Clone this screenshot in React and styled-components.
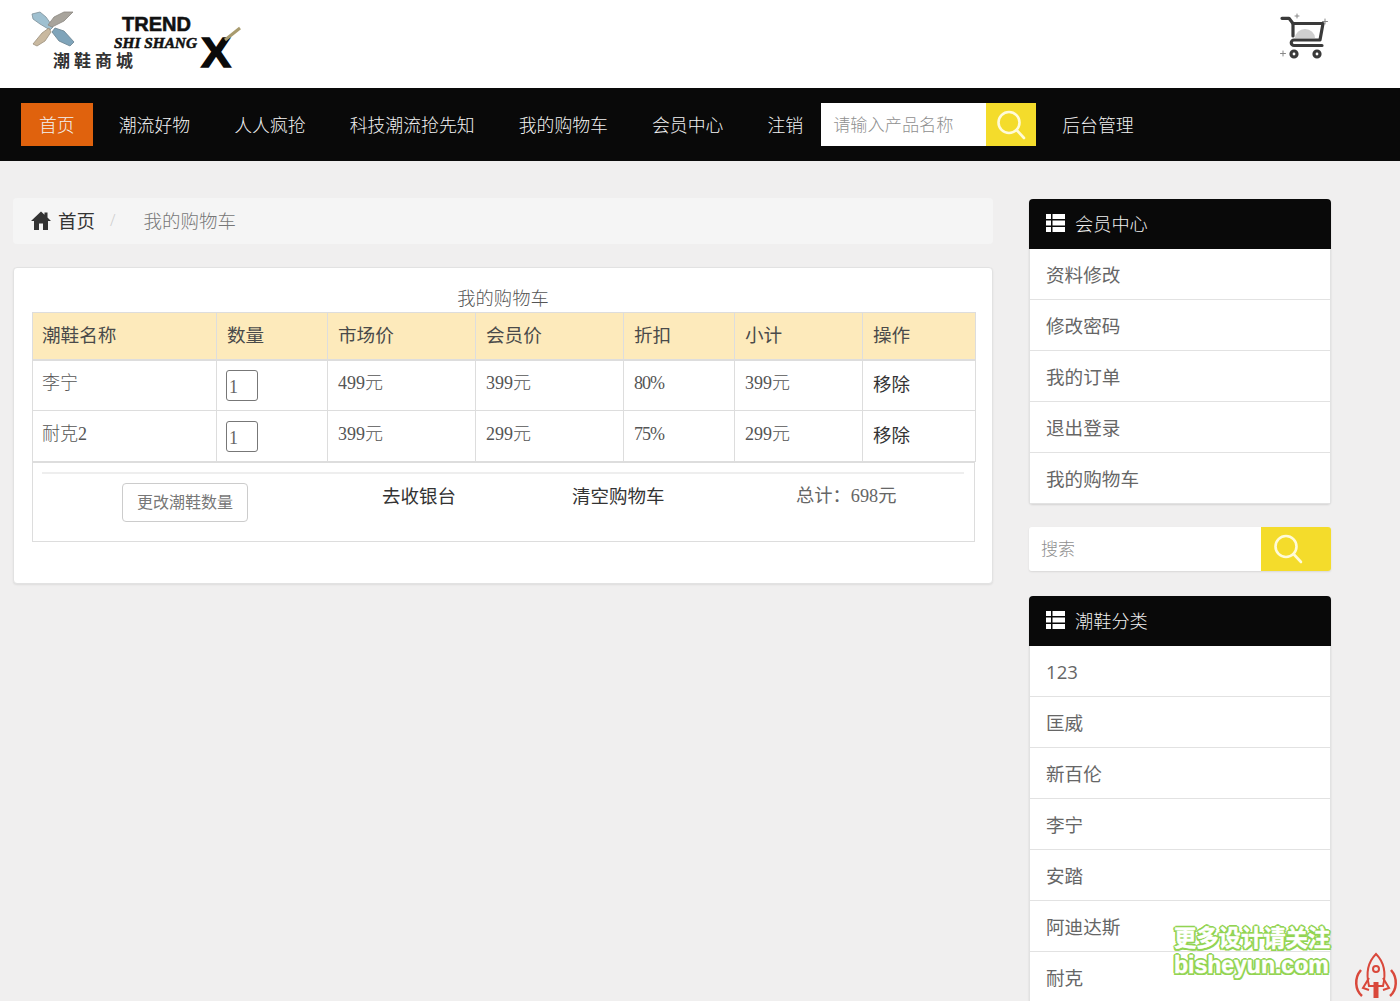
import React from "react";
import styled, { createGlobalStyle } from "styled-components";

const SANS = `"Open Sans", "Noto Sans CJK SC", sans-serif`;
const SERIF = `"Liberation Serif", "Noto Sans CJK SC", serif`;

const GlobalStyle = createGlobalStyle`
  html, body {
    margin: 0;
    height: 100%;
    overflow: hidden;
    background: #f0efef;
    font-family: ${SANS};
  }
  * {
    box-sizing: border-box;
  }
`;

const Page = styled.div`
  position: relative;
  height: 1001px;
  overflow: hidden;
`;

const TopBar = styled.header`
  height: 88px;
  background: #fff;
  display: flex;
  justify-content: space-between;
  padding: 8px 72px 0 26px;
`;

const Nav = styled.nav`
  height: 73px;
  background: #090909;
  display: flex;
  align-items: center;
  padding-left: 21px;
`;

const NavLink = styled.a`
  height: 43px;
  line-height: 45px;
  padding: 0 18px;
  font-size: 17.87px;
  color: #f2f2f2;
  font-weight: 300;
  background: ${(p) => (p.$active ? "#e0620d" : "transparent")};
  white-space: nowrap;
  & + & {
    margin-left: 8px;
  }
`;

const NavSearch = styled.form`
  display: flex;
  width: 215px;
  height: 43px;
  margin: 0 8px 0 0;
`;

const SearchInput = styled.div`
  flex: 1;
  background: #fff;
  color: #8f8f8f;
  font-size: ${(p) => p.$size || 17.2}px;
  line-height: ${(p) => p.$height || 43}px;
  padding-left: 12px;
  font-weight: 300;
`;

const SearchButton = styled.div`
  width: ${(p) => p.$width || 50}px;
  padding-right: ${(p) => p.$inset || 0}px;
  background: #f4dc2b;
  display: flex;
  align-items: center;
  justify-content: center;
`;

const Main = styled.main`
  display: flex;
  gap: 36px;
  padding: 37px 0 0 13px;
  align-items: flex-start;
`;

const Content = styled.section`
  width: 980px;
`;

const Breadcrumb = styled.div`
  height: 46px;
  background: #f5f5f5;
  border-radius: 4px;
  display: flex;
  align-items: center;
  padding: 0 0 2px 18px;
  font-size: 18.5px;
  color: #333;
  margin-bottom: 23px;
`;

const CrumbHome = styled.span`
  display: flex;
  align-items: center;
  gap: 7px;
  font-weight: 400;
`;

const CrumbDivider = styled.span`
  color: #ccc;
  margin: 0 28px 0 15px;
  font-size: 16px;
  font-weight: 300;
`;

const CrumbCurrent = styled.span`
  color: #777;
  font-weight: 300;
`;

const Card = styled.div`
  height: 317px;
  background: #fff;
  border: 1px solid #e2e2e2;
  border-radius: 4px;
  box-shadow: 0 1px 2px rgba(0, 0, 0, 0.08);
  padding: 19px 18px 0;
`;

const Table = styled.table`
  width: 943px;
  border-collapse: collapse;
  table-layout: fixed;
  font-family: ${SERIF};
  color: #555;
  font-weight: 300;
`;

const Caption = styled.caption`
  padding-right: 2px;
  font-size: 18.3px;
  line-height: 25px;
  color: #555;
  font-weight: 300;
`;

const Th = styled.th`
  height: 47px;
  padding: 0 10px 4px 10px;
  background: #fdeabb;
  border: 1px solid #dddddd;
  border-bottom-width: 2px;
  text-align: left;
  font-size: 18.6px;
  font-weight: 400;
  color: #4a4a4a;
  &:first-child {
    padding-left: 9px;
  }
`;

const Td = styled.td`
  height: 51px;
  padding: 0 10px 4px;
  border: 1px solid #dddddd;
  font-size: 18px;
  line-height: 24px;
  vertical-align: middle;
  letter-spacing: ${(p) => (p.$tight ? "-1px" : "normal")};
  &:first-child {
    padding-left: 9px;
  }
`;

const QtyBox = styled.div`
  width: 32px;
  height: 31px;
  margin: 4px 0 0 -1px;
  border: 1px solid #777;
  border-radius: 3px;
  font-size: 18px;
  line-height: 33px;
  padding-left: 2px;
  color: #666;
`;

const RemoveLink = styled.a`
  display: inline-block;
  margin-top: 2px;
  font-family: ${SANS};
  color: #333;
  font-size: 18.5px;
  font-weight: 400;
`;

const Foot = styled.div`
  width: 943px;
  height: 81px;
  border: 1px solid #dddddd;
  border-top: 2px solid #dddddd;
  margin-top: -1px;
  padding: 0 10px 0 9px;
`;

const FootRule = styled.div`
  height: 2px;
  margin-top: 9px;
  background: #eeeeee;
`;

const FootRow = styled.div`
  display: grid;
  grid-template-columns: 80px 126px 134px 76px 114px 93px 131px 100px;
  align-items: start;
  padding-top: 9px;
`;

const UpdateButton = styled.div`
  grid-column: 2;
  height: 39px;
  line-height: 37px;
  border: 1px solid #ccc;
  border-radius: 4px;
  text-align: center;
  font-family: ${SERIF};
  font-size: 16px;
  color: #777;
`;

const FootLink = styled.a`
  grid-column: ${(p) => p.$col};
  font-size: 18.5px;
  line-height: 25px;
  color: #333;
  white-space: nowrap;
`;

const Total = styled.span`
  grid-column: 8;
  font-family: ${SERIF};
  font-size: 18.3px;
  line-height: 27px;
  color: #666;
  white-space: nowrap;
`;

const Sidebar = styled.aside`
  width: 302px;
  margin-top: 1px;
`;

const Panel = styled.div`
  background: #fff;
  border-radius: 4px;
  box-shadow: 0 1px 2px rgba(0, 0, 0, 0.12);
`;

const PanelHead = styled.div`
  height: 50px;
  background: #090909;
  border-radius: 4px 4px 0 0;
  display: flex;
  align-items: center;
  gap: 10px;
  padding: 0 0 2px 17px;
  color: #f0f0f0;
  font-size: 18.2px;
  font-weight: 300;
`;

const PanelItem = styled.a`
  display: block;
  height: 51px;
  line-height: 51px;
  padding-left: 16px;
  font-size: 18.6px;
  color: #666;
  border: 1px solid #e2e2e2;
  border-top: 0;
`;

const SideSearch = styled.div`
  display: flex;
  height: 44px;
  margin: 23px 0 25px;
  box-shadow: 0 1px 2px rgba(0, 0, 0, 0.1);
  border-radius: 3px;
  overflow: hidden;
`;

const Mark = styled.div`
  position: absolute;
  left: 1174px;
  top: 925px;
  font-family: "Liberation Sans", "Noto Sans CJK SC", sans-serif;
  font-weight: 700;
  color: #fff;
  -webkit-text-stroke: 0.5px #fff;
  text-shadow: -1.5px -1.5px 0 #92d452, 1.5px -1.5px 0 #92d452, -1.5px 1.5px 0 #92d452, 1.5px 1.5px 0 #92d452,
    0 -2px 0 #92d452, 0 2px 0 #92d452, -2px 0 0 #92d452, 2px 0 0 #92d452;
  white-space: nowrap;
`;

const MarkTitle = styled.div`
  font-size: 22.3px;
  line-height: 27px;
`;

const MarkSite = styled.div`
  font-size: 23px;
  line-height: 26px;
`;

const Rocket = styled.svg`
  position: absolute;
  left: 1352px;
  top: 952px;
`;

const CartSvg = styled.svg`
  margin-top: 4px;
`;

const SearchIcon = () => (
  <svg width="30" height="32" viewBox="0 0 30 32" fill="none" stroke="#fffbd8" strokeWidth="2.6">
    <circle cx="13" cy="13.5" r="10.5" />
    <path d="M20.5 21 L28 29" strokeLinecap="round" />
  </svg>
);

const ListIcon = () => (
  <svg width="19" height="18" viewBox="0 0 19 18" fill="#fff">
    <path d="M0 0h5v5H0zM6.5 0H19v5H6.5zM0 6.5h5v5H0zM6.5 6.5H19v5H6.5zM0 13h5v5H0zM6.5 13H19v5H6.5z" />
  </svg>
);

const HomeIcon = () => (
  <svg width="20" height="19" viewBox="0 0 20 19" fill="#333">
    <path d="M10 0.5 L13.5 3.8 V1.5 H16.5 V6.6 L20 10 H17 V19 H12 V12.5 H8 V19 H3 V10 H0 Z" />
  </svg>
);

const Logo = () => (
  <svg width="230" height="72" viewBox="0 0 230 72">
    <path d="M6 6 L14 4 L20 9 L27 19 L24 22 L14 16 L7 11 Z" fill="#9fc0d0" stroke="#7d8f98" strokeWidth="0.8" />
    <path d="M47 4 L38 4 L28 9 L22 17 L26 19 L38 13 Z" fill="#a8a49c" stroke="#8a8780" strokeWidth="0.8" />
    <path d="M7 36 L16 25 L23 20 L25 24 L19 33 L11 38 Z" fill="#c9b9a0" stroke="#9a8f7c" strokeWidth="0.8" />
    <path d="M48 34 L38 23 L29 20 L26 24 L33 33 L44 38 Z" fill="#7fa4ba" stroke="#68808e" strokeWidth="0.8" />
    <text x="96" y="23" fontFamily="Liberation Sans, sans-serif" fontWeight="700" fontSize="21" fill="#111" stroke="#111" strokeWidth="0.6" textLength="69" lengthAdjust="spacingAndGlyphs">TREND</text>
    <text x="88" y="40" fontFamily="Liberation Serif, serif" fontWeight="700" fontStyle="italic" fontSize="14.5" fill="#111" stroke="#111" strokeWidth="0.5" textLength="83" lengthAdjust="spacingAndGlyphs">SHI SHANG</text>
    <text x="175" y="59" fontFamily="Liberation Sans, sans-serif" fontWeight="700" fontSize="42" fill="#0a0a0a" stroke="#0a0a0a" strokeWidth="1.4" textLength="30" lengthAdjust="spacingAndGlyphs">X</text>
    <path d="M199 32 L214 20" stroke="#a89b6e" strokeWidth="3" />
    <text x="27" y="59" fontFamily="Noto Sans CJK SC, sans-serif" fontWeight="700" fontSize="17" fill="#333" textLength="80">潮鞋商城</text>
  </svg>
);

const CartIcon = () => (
  <CartSvg width="52" height="50" viewBox="0 0 52 50" fill="none" stroke="#3a3a3a" strokeWidth="3.2" strokeLinecap="round" strokeLinejoin="round">
    <path d="M19 26 A10 9 0 0 1 39 26 Z" fill="#cfcfcf" stroke="none" />
    <path d="M6 6.3 H13 L17 11.5 H47 L44 28 H18 A2.7 2.7 0 0 0 18 33.5 H46" />
    <path d="M17 11.5 L17 24" />
    <circle cx="18" cy="42" r="3" />
    <circle cx="41" cy="42" r="3" />
    <path d="M49 7 v5 M46.5 9.5 h5 M21 2 v4 M19 4 h4 M7 39 v5 M4.5 41.5 h5" stroke="#888" strokeWidth="1" />
  </CartSvg>
);

const navItems = ["潮流好物", "人人疯抢", "科技潮流抢先知", "我的购物车", "会员中心", "注销"];
const userLinks = ["资料修改", "修改密码", "我的订单", "退出登录", "我的购物车"];
const brands = ["123", "匡威", "新百伦", "李宁", "安踏", "阿迪达斯", "耐克"];
const headers = ["潮鞋名称", "数量", "市场价", "会员价", "折扣", "小计", "操作"];
const colWidths = [184, 111, 148, 148, 111, 128, 113];
const rows = [
  { name: "李宁", market: "499元", member: "399元", rate: "80%", subtotal: "399元" },
  { name: "耐克2", market: "399元", member: "299元", rate: "75%", subtotal: "299元" },
];

const SidePanel = ({ title, items }) => (
  <Panel>
    <PanelHead>
      <ListIcon />
      {title}
    </PanelHead>
    {items.map((item) => (
      <PanelItem key={item}>{item}</PanelItem>
    ))}
  </Panel>
);

export default function App() {
  return (
    <Page>
      <GlobalStyle />
      <TopBar>
        <Logo />
        <CartIcon />
      </TopBar>
      <Nav>
        <NavLink $active>首页</NavLink>
        {navItems.map((item) => (
          <NavLink key={item}>{item}</NavLink>
        ))}
        <NavSearch>
          <SearchInput>请输入产品名称</SearchInput>
          <SearchButton>
            <SearchIcon />
          </SearchButton>
        </NavSearch>
        <NavLink>后台管理</NavLink>
      </Nav>
      <Main>
        <Content>
          <Breadcrumb>
            <CrumbHome>
              <HomeIcon />
              首页
            </CrumbHome>
            <CrumbDivider>/</CrumbDivider>
            <CrumbCurrent>我的购物车</CrumbCurrent>
          </Breadcrumb>
          <Card>
            <Table>
              <Caption>我的购物车</Caption>
              <colgroup>
                {colWidths.map((w, i) => (
                  <col key={i} width={w} />
                ))}
              </colgroup>
              <thead>
                <tr>
                  {headers.map((h) => (
                    <Th key={h}>{h}</Th>
                  ))}
                </tr>
              </thead>
              <tbody>
                {rows.map((row) => (
                  <tr key={row.name}>
                    <Td>{row.name}</Td>
                    <Td>
                      <QtyBox>1</QtyBox>
                    </Td>
                    <Td>{row.market}</Td>
                    <Td>{row.member}</Td>
                    <Td $tight>{row.rate}</Td>
                    <Td>{row.subtotal}</Td>
                    <Td>
                      <RemoveLink>移除</RemoveLink>
                    </Td>
                  </tr>
                ))}
              </tbody>
            </Table>
            <Foot>
              <FootRule />
              <FootRow>
                <UpdateButton>更改潮鞋数量</UpdateButton>
                <FootLink $col={4}>去收银台</FootLink>
                <FootLink $col={6}>清空购物车</FootLink>
                <Total>总计：698元</Total>
              </FootRow>
            </Foot>
          </Card>
        </Content>
        <Sidebar>
          <SidePanel title="会员中心" items={userLinks} />
          <SideSearch>
            <SearchInput $size={17} $height={44}>搜索</SearchInput>
            <SearchButton $width={70} $inset={16}>
              <SearchIcon />
            </SearchButton>
          </SideSearch>
          <SidePanel title="潮鞋分类" items={brands} />
        </Sidebar>
      </Main>
      <Mark>
        <MarkTitle>更多设计请关注</MarkTitle>
        <MarkSite>bisheyun.com</MarkSite>
      </Mark>
      <Rocket width="48" height="50" viewBox="0 0 48 50" fill="none" stroke="#d9483b" strokeWidth="2">
        <path d="M24 2 C32 10 34 22 31 34 H17 C14 22 16 10 24 2 Z" />
        <circle cx="24" cy="17" r="3" />
        <path d="M17 26 L11 36 L17 38 M31 26 L37 36 L31 38" />
        <path d="M24 30 V46" strokeWidth="5" />
        <path d="M9 18 C2 26 3 38 10 44 M39 18 C46 26 45 38 38 44" strokeWidth="2.5" />
      </Rocket>
    </Page>
  );
}
